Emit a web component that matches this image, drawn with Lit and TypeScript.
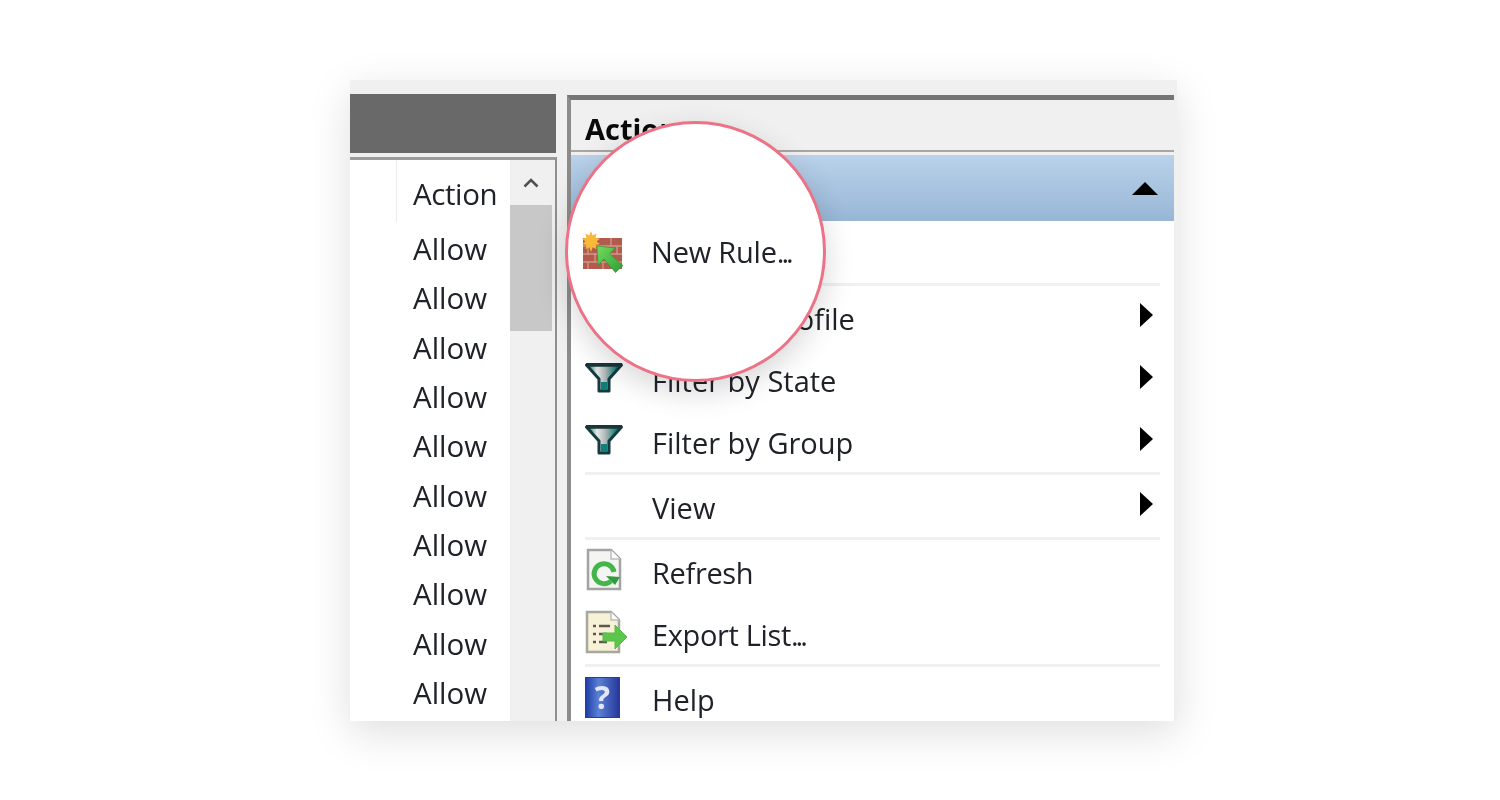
import { LitElement, html, css } from "lit";
import { customElement } from "lit/decorators.js";

const firewall = html`<svg width="42" height="42" viewBox="0 0 42 42">
  <defs><linearGradient id="ar" x1="0" y1="0" x2="1" y2="1"><stop offset="0" stop-color="#74dc5e"/><stop offset="1" stop-color="#2d9c37"/></linearGradient></defs>
  <rect x="1" y="7" width="39" height="31" fill="#b25a4b"/>
  <path d="M1 15h39M1 23h39M1 31h39M13 7v8M29 7v8M6 15v8M21 15v8M35 15v8M13 23v8M29 23v8M6 31v7M21 31v7" stroke="#cf9a88" stroke-width="1.300" fill="none"/>
  <path d="M9 0l1.700 4.500 3.800-2-1 4.200 4.500 1-3.500 2.700 3.500 2.700-4.500 1 1 4.200-3.800-2L9 21l-1.700-4.700-3.800 2 1-4.200-4.500-1 3.500-2.700L0 7.700l4.500-1-1-4.200 3.800 2z" fill="#f9b838"/>
  <path d="M15 15L33 17 27.500 23 41 34.500 33.500 41.500 22 28 16 34z" fill="url(#ar)" stroke="#3a9c3a" stroke-width=".8"/>
</svg>`;

const funnel = html`<svg width="38" height="32" viewBox="0 0 38 32">
  <defs><linearGradient id="fg" x1="0" y1="0" x2="1" y2="0"><stop offset="0" stop-color="#0b6a68"/><stop offset=".3" stop-color="#e4e9e8"/><stop offset=".55" stop-color="#aeb6b5"/><stop offset=".85" stop-color="#0c8079"/></linearGradient></defs>
  <path d="M1.500 3h35L24 17v12h-10V17z" fill="url(#fg)" stroke="#143c40" stroke-width="3" stroke-linejoin="round"/>
  <path d="M1 1h36v3.500H1z" fill="#1d3438"/>
  <path d="M16 20h6v8h-6z" fill="#0f8078"/>
</svg>`;

const refresh = html`<svg width="38" height="44" viewBox="0 0 38 44">
  <path d="M3 2h23l9 9v30H3z" fill="#f4f4f2" stroke="#a3a3a3" stroke-width="2.500"/>
  <path d="M26 2v9h9" fill="#fff" stroke="#bdbdbd" stroke-width="1.500"/>
  <path d="M26 33a10 10 0 1 1 3-9" fill="none" stroke="#43b54a" stroke-width="5"/>
  <path d="M21 28l14 1-5 8z" fill="#2f9c3e"/>
</svg>`;

const exportList = html`<svg width="44" height="44" viewBox="0 0 44 44">
  <path d="M2 2h24l8 8v32H2z" fill="#f7f1d8" stroke="#a7a7a0" stroke-width="2.500"/>
  <path d="M26 2v8h8" fill="#fff" stroke="#bdbdb5" stroke-width="1.500"/>
  <path d="M8 16h3M14 16h11M8 24h3M14 24h8M8 32h3M14 32h8" stroke="#5b5b52" stroke-width="2.500"/>
  <path d="M18 23h12v-8l12 12-12 12v-8H18z" fill="#5cc64a" stroke="#58b947" stroke-width="1"/>
</svg>`;

@customElement("app-root")
export class AppRoot extends LitElement {
  static styles = css`
    :host { display: block; height: 800px; padding: 80px 0 0 350px; box-sizing: border-box; background: #fff; font-family: "Open Sans", "Noto Sans", sans-serif; color: #20222a; }
    .card { position: relative; width: 827px; height: 641px; background: #f0f0f0; box-shadow: 0 12px 40px rgba(0,0,0,.13); display: flex; overflow: hidden; }
    .shot { display: flex; flex: 1; filter: blur(.6px); min-width: 0; }
    .left { width: 207px; flex: none; display: flex; flex-direction: column; padding-top: 14px; box-sizing: border-box; }
    .dark { height: 59px; width: 206px; background: #696969; flex: none; }
    .list { margin-top: 4px; flex: 1; border-top: 3px solid #9c9c9c; border-right: 2px solid #8f8f8f; display: flex; min-height: 0; background: #f0f0f0; }
    .cols { width: 160px; flex: none; background: #fff; display: flex; flex-direction: column; }
    .head { height: 62px; flex: none; margin-left: 46px; padding: 4px 0 0 16px; border-left: 1px solid #ececec; display: flex; align-items: center; box-sizing: border-box; font-size: 29.500px; letter-spacing: -.4px; }
    .cell { height: 49.300px; flex: none; box-sizing: border-box; padding: 4px 0 0 63px; display: flex; align-items: center; font-size: 29.500px; }
    .scroll { flex: 1; padding-right: 3px; display: flex; flex-direction: column; }
    .up { height: 45px; flex: none; display: flex; align-items: center; justify-content: center; }
    .thumb { height: 126px; flex: none; background: #c8c8c8; }
    .right { margin-left: 10px; flex: 1; display: flex; flex-direction: column; padding: 15px 3px 0 0; min-width: 0; }
    .panel { flex: 1; border-top: 5px solid #757575; border-left: 4px solid #8c8c8c; display: flex; flex-direction: column; min-height: 0; }
    .title { height: 52px; flex: none; background: #f0f0f0; border-bottom: 2px solid #a9a5a5; box-sizing: border-box; display: flex; align-items: center; padding: 6px 0 0 14px; font-size: 29px; font-weight: 700; color: #0a0a0a; }
    .section { margin-top: 3px; height: 66px; flex: none; background: linear-gradient(#bad2ea, #97b6d6); display: flex; align-items: center; justify-content: flex-end; padding: 0 16px 0 18px; }
    .tri { width: 0; height: 0; border-left: 13px solid transparent; border-right: 13px solid transparent; border-bottom: 13px solid #000; }
    .body { flex: 1; background: #fff; padding: 0 14px; min-height: 0; }
    .row { height: 62px; display: flex; align-items: center; font-size: 29px; }
    .ico { width: 67px; flex: none; display: flex; align-items: center; margin-top: -2px; }
    .name { flex: 1; padding-top: 2px; }
    .tight { letter-spacing: -.35px; }
    .dots { letter-spacing: -3px; }
    .arrow { width: 0; height: 0; border-top: 12px solid transparent; border-bottom: 12px solid transparent; border-left: 13px solid #000; margin-right: 7px; margin-top: -4px; }
    .sep { height: 3px; background: #f0f0f0; }
    .help { width: 35px; height: 41px; margin-top: 0; box-sizing: border-box; border: 1px solid #2a3d8f; background: linear-gradient(90deg, #1f3fa6, #5b80d6 38%, #27399a); display: flex; align-items: center; justify-content: center; font-size: 32px; line-height: 1; font-weight: 700; color: #e2e7f6; }
    .lens { position: absolute; left: 215px; top: 41px; width: 261px; height: 261px; box-sizing: border-box; border-radius: 50%; background: #fff; border: 3px solid #ec7286; box-shadow: 0 10px 30px rgba(0,0,0,.16); display: flex; align-items: center; padding-left: 14px; font-size: 29px; }
    .lens .label { margin-left: 27px; filter: blur(.5px); letter-spacing: -.2px; }
    .lens svg { filter: blur(.7px); flex: none; }
  `;

  private item(icon: unknown, name: unknown, arrow = false) {
    return html`<div class="row"><span class="ico">${icon}</span><span class="name">${name}</span>${arrow ? html`<span class="arrow"></span>` : ""}</div>`;
  }

  render() {
    const allows = Array.from({ length: 10 }, () => html`<div class="cell">Allow</div>`);
    return html`<div class="card">
      <div class="shot">
        <div class="left">
          <div class="dark"></div>
          <div class="list">
            <div class="cols"><div class="head">Action</div>${allows}</div>
            <div class="scroll">
              <div class="up"><svg width="16" height="10" viewBox="0 0 16 10"><path d="M1.500 8.500L8 2l6.500 6.500" fill="none" stroke="#505050" stroke-width="2.500"/></svg></div>
              <div class="thumb"></div>
            </div>
          </div>
        </div>
        <div class="right">
          <div class="panel">
            <div class="title">Actions</div>
            <div class="section"><span class="tri"></span></div>
            <div class="body">
              <div class="row"></div>
              <div class="sep"></div>
              ${this.item("", "Filter by Profile", true)}
              ${this.item(funnel, "Filter by State", true)}
              ${this.item(funnel, "Filter by Group", true)}
              <div class="sep"></div>
              ${this.item("", "View", true)}
              <div class="sep"></div>
              ${this.item(refresh, html`<span class="tight">Refresh</span>`)}
              ${this.item(exportList, html`<span class="tight">Export List<span class="dots">...</span></span>`)}
              <div class="sep"></div>
              ${this.item(html`<span class="help">?</span>`, "Help")}
            </div>
          </div>
        </div>
      </div>
      <div class="lens">${firewall}<span class="label">New Rule<span class="dots">...</span></span></div>
    </div>`;
  }
}
